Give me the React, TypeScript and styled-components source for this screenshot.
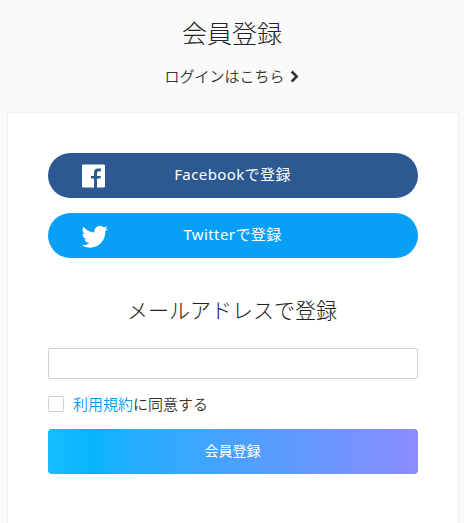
import React from "react";
import styled, { createGlobalStyle } from "styled-components";

const GlobalStyle = createGlobalStyle`
  *, *::before, *::after { box-sizing: border-box; }
  html { overflow: hidden; background: #fafafa; }
  body {
    margin: 0;
    color: #222;
    font-family: "Noto Sans", "Noto Sans CJK JP", sans-serif;
  }
`;

const Page = styled.main`
  height: 523px;
  overflow: hidden;
  display: flex;
  flex-direction: column;
`;

const Header = styled.header`
  height: 112px;
  flex-shrink: 0;
  display: flex;
  flex-direction: column;
  align-items: center;
  padding-top: 15px;
`;

const Title = styled.h1`
  margin: 0;
  font-size: 25px;
  line-height: 36px;
  font-weight: 300;
`;

const LoginLink = styled.a`
  display: flex;
  align-items: center;
  gap: 5px;
  margin: 14px 1px 0 0;
  color: #333;
  font-size: 15px;
  line-height: 22px;
  font-weight: 350;
`;

const Card = styled.section`
  flex: 1;
  margin: 0 5px 0 7px;
  padding: 40px;
  background: #fff;
  border: 1px solid #eee;
  border-bottom: 0;
`;

const SocialButton = styled.button<{ $color: string }>`
  width: 370px;
  height: 45px;
  margin: 0 0 15px;
  padding: 0 1px 2px 0;
  border: 0;
  border-radius: 23px;
  display: grid;
  grid-template-columns: 94px 1fr 94px;
  align-items: center;
  background: ${(p) => p.$color};
  color: #fff;
  font: inherit;
  font-size: 15px;
  svg { display: block; margin: 3px 0 0 33px; }
`;

const SocialLabel = styled.span`
  text-align: center;
  white-space: nowrap;
  letter-spacing: 0.4px;
  padding-bottom: 2px;
`;

const SubTitle = styled.h2`
  margin: 36px 2px 22px 0;
  font-size: 21px;
  line-height: 32px;
  font-weight: 300;
  text-align: center;
`;

const EmailInput = styled.input`
  display: block;
  width: 370px;
  height: 31px;
  border: 1px solid #d2d2d2;
  border-radius: 2px;
  background: #fff;
  outline: none;
`;

const Agreement = styled.label`
  display: flex;
  align-items: center;
  height: 22px;
  margin: 14px 0;
  color: #333;
  font-size: 15px;
  font-weight: 350;
  line-height: 22px;
`;

const Checkbox = styled.input`
  appearance: none;
  width: 16px;
  height: 16px;
  margin: 0 9px 0 0;
  border: 1px solid #d2d2d2;
  border-radius: 2px;
  background: #fff;
`;

const TermsLink = styled.a`
  color: #0795f0;
`;

const SubmitButton = styled.button`
  display: block;
  width: 370px;
  height: 45px;
  padding: 0 1px 3px 0;
  border: 0;
  border-radius: 4px;
  background: linear-gradient(90deg, #16bdff 0%, #08b4ff 12%, #25adff 23%, #8c8cff 100%);
  color: #fff;
  font: inherit;
  font-size: 14px;
`;

function Chevron() {
  return (
    <svg width="9" height="13" viewBox="0 0 9 13" fill="none" stroke="#333" strokeWidth="2.5">
      <path d="M1.7 1.5 L6.7 6.5 L1.7 11.5" />
    </svg>
  );
}

function FacebookIcon() {
  return (
    <svg width="25" height="24" viewBox="0 0 25 24" fill="#fff">
      <path d="M2.2 .5H22.7Q24 .5 24 1.8V22.2Q24 23.5 22.7 23.5H16V14.6H19.4L19.8 12H16V9Q16 7.3 17.6 7.3H20V4.6H17.2Q13 4.6 13 8.6V12H10V14.6H13V23.5H2.2Q1 23.5 1 22.2V1.8Q1 .5 2.2 .5Z" />
    </svg>
  );
}

function TwitterIcon() {
  return (
    <svg width="27" height="23" viewBox="-.5 -.5 24.5 20.5" preserveAspectRatio="none" fill="#fff">
      <path d="M23.95 2.57a10 10 0 0 1-2.82.78 4.96 4.96 0 0 0 2.16-2.73c-.95.56-2 .96-3.13 1.19a4.92 4.92 0 0 0-8.38 4.48C7.69 6.1 4.07 4.13 1.64 1.16a4.82 4.82 0 0 0-.67 2.48c0 1.71.87 3.21 2.19 4.1a4.9 4.9 0 0 1-2.23-.62v.06a4.92 4.92 0 0 0 3.95 4.83 5 5 0 0 1-2.21.08 4.94 4.94 0 0 0 4.6 3.42A9.87 9.87 0 0 1 0 17.54a14 14 0 0 0 7.56 2.21c9.05 0 14-7.5 14-13.98 0-.21 0-.42-.02-.63a9.9 9.9 0 0 0 2.46-2.55z" />
    </svg>
  );
}

export default function App() {
  return (
    <>
      <GlobalStyle />
      <Page>
        <Header>
          <Title>会員登録</Title>
          <LoginLink>
            <span>ログインはこちら</span>
            <Chevron />
          </LoginLink>
        </Header>
        <Card>
          <SocialButton $color="#2c5991">
            <FacebookIcon />
            <SocialLabel>Facebookで登録</SocialLabel>
          </SocialButton>
          <SocialButton $color="#08a0f7">
            <TwitterIcon />
            <SocialLabel>Twitterで登録</SocialLabel>
          </SocialButton>
          <SubTitle>メールアドレスで登録</SubTitle>
          <EmailInput type="email" aria-label="メールアドレス" />
          <Agreement>
            <Checkbox type="checkbox" />
            <TermsLink>利用規約</TermsLink>
            <span>に同意する</span>
          </Agreement>
          <SubmitButton>会員登録</SubmitButton>
        </Card>
      </Page>
    </>
  );
}
